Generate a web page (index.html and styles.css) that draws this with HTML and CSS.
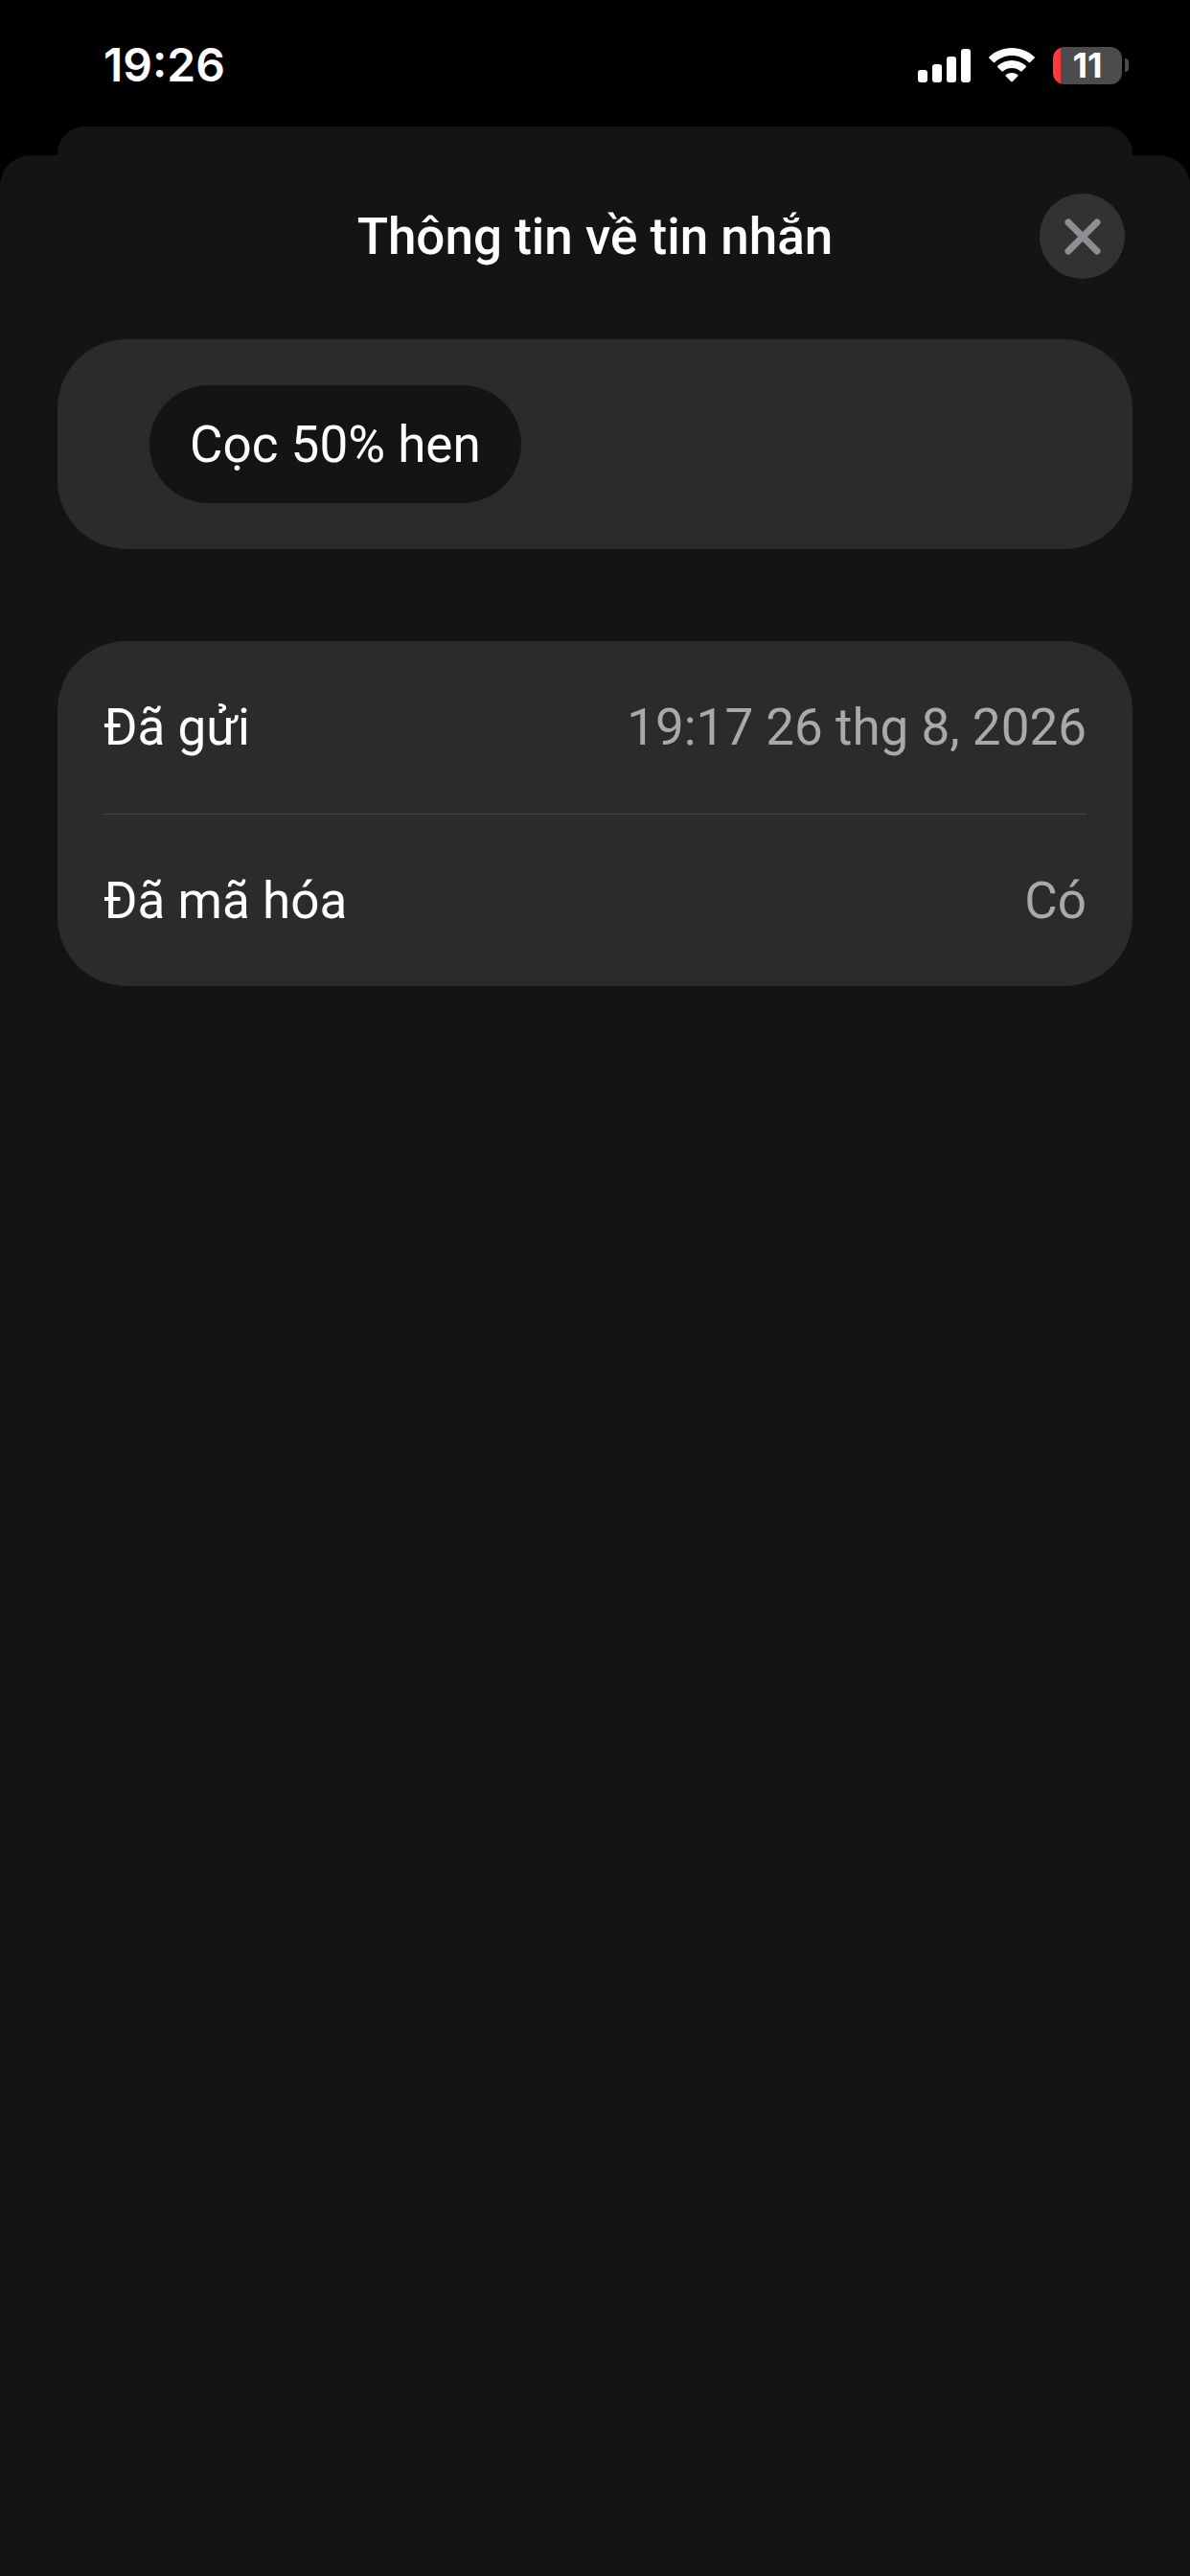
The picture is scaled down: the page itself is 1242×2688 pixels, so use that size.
FILE: index.html
```html
<!DOCTYPE html>
<html lang="vi">
<head>
  <meta charset="UTF-8">
  <meta name="viewport" content="width=device-width, initial-scale=1.0">
  <title>Thông tin về tin nhắn</title>
  <link rel="stylesheet" href="styles.css">
</head>
<body>
  <!-- Status bar -->
  <div class="status-bar">
    <span class="time">19:26</span>
    <div class="status-icons">
      <svg class="signal" width="55" height="35" viewBox="0 0 55 35" fill="#fff" aria-hidden="true">
        <rect x="0" y="22" width="10" height="13" rx="3"/>
        <rect x="15" y="16" width="10" height="19" rx="3"/>
        <rect x="30" y="8" width="10" height="27" rx="3"/>
        <rect x="45" y="0" width="10" height="35" rx="3"/>
      </svg>
      <svg class="wifi" width="48" height="36" viewBox="0 0 48 36" fill="#fff" aria-hidden="true">
        <path d="M24 0C33 0 41.300 3.500 47.500 9.200Q48.300 10 47.500 10.800L43.300 15Q42.600 15.700 41.800 15C37.100 10.700 30.900 8 24 8S10.900 10.700 6.200 15Q5.400 15.700 4.700 15L.5 10.800Q-.3 10 .5 9.200C6.700 3.500 15 0 24 0Z"/>
        <path d="M24 13C29.500 13 34.700 15.100 38.700 18.600Q39.500 19.400 38.700 20.200L34.600 24.300Q33.900 25 33.100 24.300C30.600 22.200 27.500 21 24 21S17.400 22.200 14.900 24.300Q14.100 25 13.400 24.300L9.300 20.200Q8.500 19.400 9.300 18.600C13.300 15.100 18.500 13 24 13Z"/>
        <path d="M24 26C26.300 26 28.500 26.800 30.200 28.100Q31 28.800 30.200 29.600L24.900 34.900Q24 35.800 23.100 34.900L17.800 29.600Q17 28.800 17.800 28.100C19.500 26.800 21.700 26 24 26Z"/>
      </svg>
      <div class="battery">
        <span class="battery-body">11</span>
        <span class="battery-tip"></span>
      </div>
    </div>
  </div>

  <!-- Sheet underneath -->
  <div class="back-sheet"></div>

  <main class="sheet">
    <header class="sheet-header">
      <h1>Thông tin về tin nhắn</h1>
      <button class="close-btn" type="button" aria-label="Đóng">
        <svg width="38" height="38" viewBox="0 0 38 38" fill="none" stroke="#8f8e94" stroke-width="7" stroke-linecap="round" aria-hidden="true">
          <path d="M4 4L34 34M34 4L4 34"/>
        </svg>
      </button>
    </header>

    <section class="card message-card">
      <p class="bubble">Cọc 50% hen</p>
    </section>

    <dl class="card details">
      <div class="row">
        <dt>Đã gửi</dt>
        <dd>19:17 26 thg 8, 2026</dd>
      </div>
      <div class="row">
        <dt>Đã mã hóa</dt>
        <dd>Có</dd>
      </div>
    </dl>
  </main>
</body>
</html>
```
FILE: styles.css
```css
* {
  box-sizing: border-box;
}

body {
  margin: 0;
  min-height: 100vh;
  display: flex;
  flex-direction: column;
  background-color: #000;
  color: #fff;
  font-family: Roboto, "Liberation Sans", sans-serif;
  font-size: 53px;
  line-height: 64px;
}

.status-bar {
  height: 132px;
  padding: 4px 64px 0 108px;
  display: flex;
  justify-content: space-between;
  align-items: center;
}

.time {
  font-family: Inter, sans-serif;
  font-size: 48px;
  font-weight: 600;
}

.status-icons {
  display: flex;
  align-items: center;
  gap: 19px;
}

.battery {
  display: flex;
  align-items: center;
  gap: 3px;
}

.battery-body {
  width: 72px;
  height: 39px;
  border-radius: 12px;
  background: linear-gradient(to right, #ff3a3e 8px, #4c4c4c 8px);
  font-family: Inter, sans-serif;
  font-size: 36px;
  font-weight: 700;
  line-height: 39px;
  text-align: center;
}

.battery-tip {
  width: 4px;
  height: 14px;
  border-radius: 0 4px 4px 0;
  background-color: #4c4c4c;
}

.back-sheet {
  height: 30px;
  margin: 0 60px;
  border-radius: 28px 28px 0 0;
  background-color: #141414;
}

.sheet {
  flex: 1;
  padding: 40px 60px;
  border-radius: 32px 32px 0 0;
  background-color: #141414;
}

.sheet-header {
  display: grid;
  grid-template-columns: 1fr auto 1fr;
  align-items: center;
  margin-bottom: 63px;
  padding: 0 8px;
}

.sheet-header h1 {
  grid-column: 2;
  margin: 0;
  font-size: 53px;
  font-weight: 500;
}

.close-btn {
  justify-self: end;
  display: flex;
  justify-content: center;
  align-items: center;
  width: 89px;
  height: 89px;
  padding: 0;
  border: none;
  border-radius: 50%;
  background-color: #323232;
  cursor: pointer;
}

.card {
  margin: 0 0 96px;
  border-radius: 72px;
  background-color: #2b2b2b;
}

.message-card {
  display: flex;
  padding: 48px 96px;
}

.bubble {
  margin: 0;
  padding: 30px 42px 29px;
  border-radius: 62px;
  background-color: #141414;
}

.details {
  padding: 0 48px;
}

.row {
  display: flex;
  justify-content: space-between;
  align-items: center;
  gap: 24px;
  min-height: 180px;
}

.row + .row {
  border-top: 1px solid #454545;
}

.row dd {
  margin: 0;
  color: #a9a9a9;
  text-align: right;
}
```
